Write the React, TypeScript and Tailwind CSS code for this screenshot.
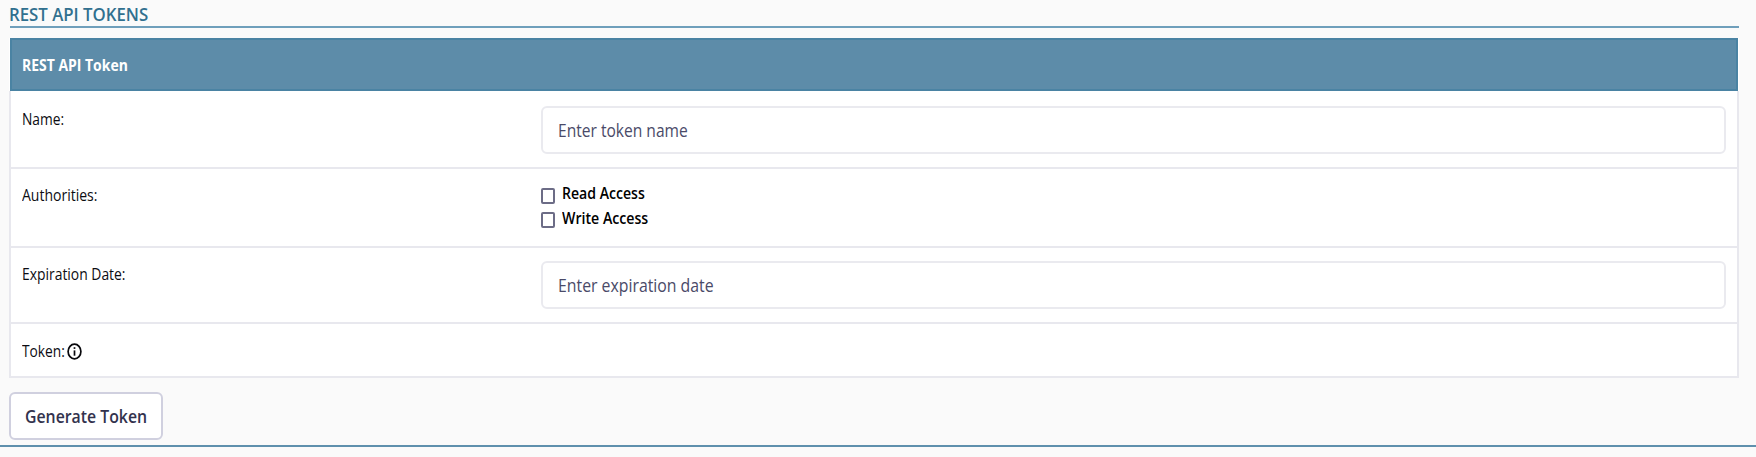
import React from "react";

function Label({ text, className }: { text: string; className: string }) {
  return <span className={`block w-max origin-left whitespace-nowrap ${className}`}>{text}</span>;
}

function Row({ label, className, labelClass, children }: { label: React.ReactNode; className: string; labelClass: string; children?: React.ReactNode }) {
  return (
    <div className={`flex border-x-2 border-b-2 border-[#e8e8ee] pr-[11px] pl-[11px] ${className}`}>
      <div className={`w-[519px] shrink-0 text-base leading-6 text-[#0c0c12] ${labelClass}`}>{label}</div>
      {children}
    </div>
  );
}

function Field({ text, className }: { text: string; className: string }) {
  return (
    <div className="flex h-12 flex-1 items-center rounded-md border-2 border-[#eaeaef] bg-white pl-[15px] text-[18.5px] leading-6 text-[#4a4a68]">
      <Label text={text} className={className} />
    </div>
  );
}

function Check({ text, className }: { text: string; className: string }) {
  return (
    <div className="flex h-[24.5px] text-base leading-6 font-semibold text-black">
      <span className="mt-[6.5px] mr-[7px] h-[16px] w-[14px] shrink-0 rounded-[2px] border-2 border-[#6c6c86] bg-white" />
      <Label text={text} className={className} />
    </div>
  );
}

function InfoIcon() {
  return (
    <svg className="mt-[3.5px] h-[17px] w-[15px]" viewBox="0 0 15 17" fill="none">
      <ellipse cx="7.5" cy="8.5" rx="6.4" ry="7.3" stroke="#08080c" strokeWidth="1.7" />
      <path d="M7.5 7.4v5.3" stroke="#08080c" strokeWidth="1.7" />
      <path d="M7.5 4.2v1.7" stroke="#08080c" strokeWidth="1.7" />
    </svg>
  );
}

export default function App() {
  return (
    <main className="h-[457px] w-full overflow-hidden bg-[#fafafa] font-['Open_Sans',sans-serif]">
      <div className="flex h-[447px] flex-col items-start border-b-2 border-[#5f90ad] pl-[9px]">
        <h1 className="ml-px h-[28px] w-[1729px] border-b-2 border-[#6f9fbb] pt-[2px] text-[18.5px] leading-6 font-semibold text-[#31708f]">
          <Label text="REST API TOKENS" className="-ml-[0.7px] scale-x-[0.907]" />
        </h1>
        <section className="mt-[10px] w-[1730px] bg-white">
          <div className="mx-px h-[53px] border-2 border-[#4a83a3] bg-[#5d8ca9] pt-[13px] pl-[10px] text-base leading-6 font-bold text-white">
            <Label text="REST API Token" className="scale-x-[0.872]" />
          </div>
          <Row
            className="h-[78px] pt-[15px]"
            labelClass="pt-px"
            label={<Label text="Name:" className="scale-x-[0.86]" />}
          >
            <Field text="Enter token name" className="scale-x-[0.842]" />
          </Row>
          <Row
            className="h-[79px] pt-[12px]"
            labelClass="pt-[2px]"
            label={<Label text="Authorities:" className="scale-x-[0.875]" />}
          >
            <div>
              <Check text="Read Access" className="scale-x-[0.88]" />
              <Check text="Write Access" className="scale-x-[0.885]" />
            </div>
          </Row>
          <Row
            className="h-[76px] pt-[13px]"
            labelClass="pt-px"
            label={<Label text="Expiration Date:" className="scale-x-[0.868]" />}
          >
            <Field text="Enter expiration date" className="scale-x-[0.855]" />
          </Row>
          <Row
            className="h-[54px] pt-[15px]"
            labelClass="flex"
            label={
              <>
                <span className="w-[45px]">
                  <Label text="Token:" className="scale-x-[0.86]" />
                </span>
                <InfoIcon />
              </>
            }
          />
        </section>
        <button className="mt-[14px] flex h-[48px] w-[154px] items-center rounded-md border-2 border-[#d0d0df] bg-white pl-[14px] text-[18.5px] leading-6 font-semibold text-[#32324d]">
          <Label text="Generate Token" className="scale-x-[0.855]" />
        </button>
      </div>
    </main>
  );
}
